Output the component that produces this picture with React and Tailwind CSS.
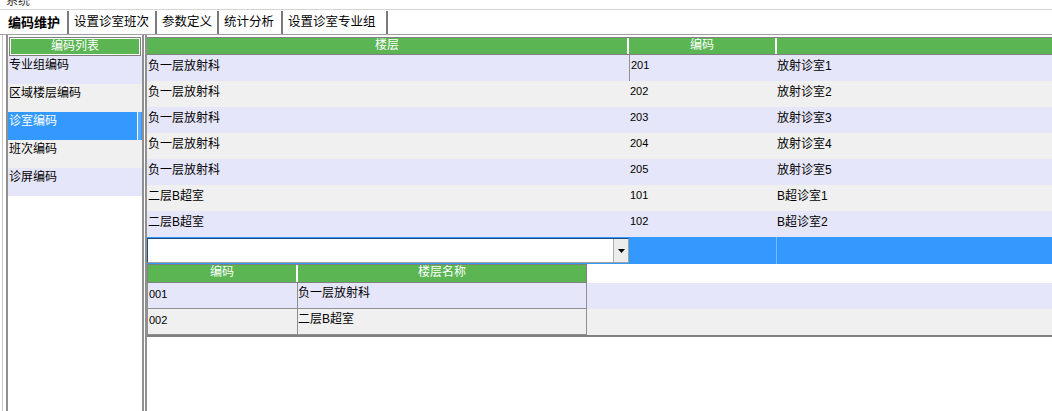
import React from 'react';

const FONT = { fontFamily: '"Liberation Sans","Noto Sans CJK SC",sans-serif' };

const codeTypes = ['专业组编码', '区域楼层编码', '诊室编码', '班次编码', '诊屏编码'];

const rooms = [
  { floor: '负一层放射科', code: '201', name: '放射诊室1' },
  { floor: '负一层放射科', code: '202', name: '放射诊室2' },
  { floor: '负一层放射科', code: '203', name: '放射诊室3' },
  { floor: '负一层放射科', code: '204', name: '放射诊室4' },
  { floor: '负一层放射科', code: '205', name: '放射诊室5' },
  { floor: '二层B超室', code: '101', name: 'B超诊室1' },
  { floor: '二层B超室', code: '102', name: 'B超诊室2' },
];

const floors = [
  { code: '001', name: '负一层放射科' },
  { code: '002', name: '二层B超室' },
];

// tab label + width up to its right separator
const tabs = [
  { t: '编码维护', w: 'w-[66px]' },
  { t: '设置诊室班次', w: 'w-[88px]' },
  { t: '参数定义', w: 'w-[62px]' },
  { t: '统计分析', w: 'w-[64px]' },
  { t: '设置诊室专业组', w: 'w-[105px]' },
];

export default function App() {
  return (
    <div className="w-[1052px] h-[411px] bg-white overflow-hidden flex flex-col text-[12px] text-black" style={FONT}>
      {/* window title, cut off at top */}
      <div className="h-[9px] overflow-hidden pl-[6px] shrink-0">
        <div className="-mt-[6px] leading-[14px] text-[#333]">系统</div>
      </div>

      {/* tab strip */}
      <div className="h-[25px] shrink-0 flex items-end border-t border-[#d4d4d4] pl-[3px]">
        {tabs.map((tab, i) => (
          <div
            key={tab.t}
            className={`h-[23px] flex items-center pl-[5px] border-r-2 border-[#7a7a7a] ${tab.w} ${
              i === 0 ? 'font-bold text-[13px] bg-white' : 'text-[12.5px]'
            }`}
          >
            {tab.t}
          </div>
        ))}
      </div>

      {/* main */}
      <div className="flex-1 flex border-t border-[#a0a0a0] min-h-0">
        {/* left list */}
        <div className="ml-[2px] w-[142px] flex border-l border-[#c8c8c8] shrink-0">
          <div className="ml-[3px] flex-1 border-l-2 border-r-2 border-[#909090] pt-[2px] flex flex-col">
            <div className="mx-[1px] h-[19px] border border-[#808080] p-[1px] bg-white">
              <div className="h-full bg-[#5ab552] text-white text-center leading-[15px]">编码列表</div>
            </div>
            {codeTypes.map((c, i) => {
              const sel = i === 2;
              const bg = sel ? 'bg-[#3399ff] text-white' : i % 2 === 0 ? 'bg-[#e6e6fa]' : 'bg-[#f0f0f0]';
              return (
                <div key={c} className={`h-[28px] flex items-start pl-[1px] leading-[18px] relative ${bg}`}>
                  {c}
                  {sel && <div className="absolute right-[1px] top-0 h-full w-[4px] bg-[#5aabff] border-l border-white" />}
                </div>
              );
            })}
          </div>
        </div>

        {/* right grid */}
        <div className="flex-1 ml-[1px] border-l-2 border-[#909090] pt-[2px] flex flex-col min-w-0">
          <div className="h-[18px] border-y border-[#808080] flex bg-[#5ab552] text-white leading-[15px] shrink-0">
            <div className="w-[482px] text-center border-r-2 border-white">楼层</div>
            <div className="w-[148px] text-center border-r-2 border-white">编码</div>
            <div className="flex-1" />
          </div>

          {rooms.map((r, i) => (
            <div key={r.code} className={`h-[26px] flex items-center shrink-0 ${i % 2 === 0 ? 'bg-[#e6e6fa]' : 'bg-[#f0f0f0]'}`}>
              <div className="w-[482px] pl-[1px] -mt-[4px]">{r.floor}</div>
              <div className={`w-[148px] self-stretch flex items-center pl-[1px] text-[11px] ${i === 0 ? 'border-l border-[#909090]' : ''}`}>
                <span className="-mt-[5px]">{r.code}</span>
              </div>
              <div className="flex-1 -mt-[4px]">{r.name}</div>
            </div>
          ))}

          {/* editing row */}
          <div className="h-[27px] flex bg-[#3399ff] shrink-0">
            <div className="w-[482px] h-[25px] mt-[1px] bg-white border border-[#1c4c7c] border-r-[#a0a0a0] border-b-[#a0a0a0] flex justify-end">
              <div className="w-[15px] h-full bg-[#ececec] border-l border-[#b0b0b0] flex items-center justify-center">
                <svg width="7" height="4" viewBox="0 0 7 4"><path d="M0 0h7L3.5 4z" fill="#000" /></svg>
              </div>
            </div>
            <div className="w-[148px] border-r border-[#7db9ff]" />
            <div className="flex-1" />
          </div>

          {/* drop-down sub grid */}
          <div className="flex flex-col border-b-2 border-[#808080] shrink-0">
            <div className="h-[19px] flex bg-white">
              <div className="w-[440px] flex border border-[#808080] bg-[#5ab552] text-white leading-[15px]">
                <div className="w-[150px] text-center border-r-2 border-white">编码</div>
                <div className="flex-1 text-center">楼层名称</div>
              </div>
            </div>
            {floors.map((f, i) => (
              <div key={f.code} className={`h-[26px] flex ${i === 0 ? 'bg-[#e6e6fa]' : 'bg-[#f0f0f0]'}`}>
                <div className="w-[440px] flex border-x border-b border-[#909090]">
                  <div className="w-[150px] pl-[1px] pt-[3px] text-[11px] border-r border-[#909090]">{f.code}</div>
                  <div className="flex-1 pt-[1px]">{f.name}</div>
                </div>
              </div>
            ))}
          </div>
          <div className="flex-1" />
        </div>
      </div>
    </div>
  );
}
